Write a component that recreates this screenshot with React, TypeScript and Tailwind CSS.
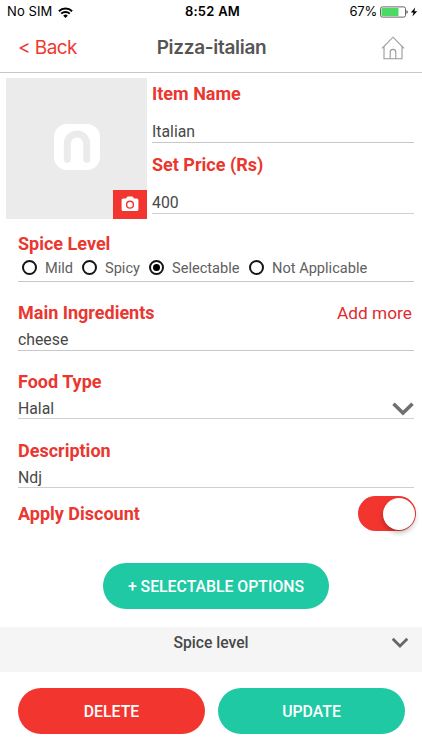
import React, { useState } from 'react';

const levels = [
  { label: 'Mild', width: 'w-[60px]' },
  { label: 'Spicy', width: 'w-[67px]' },
  { label: 'Selectable', width: 'w-[100px]' },
  { label: 'Not Applicable', width: 'w-[130px]' },
];

const StatusBar = () => (
  <div className="h-6 flex items-center justify-between pl-[7px] pr-[4px] text-[13px] text-black font-['Inter',sans-serif]">
    <div className="flex-1 flex items-center gap-[6px]">
      <span className="tracking-[0.1px]">No SIM</span>
      <svg width="15" height="11" viewBox="0 0 15 11" fill="none" stroke="#000" strokeWidth="1.9">
        <path d="M0.9 4.2a9.4 9.4 0 0 1 13.2 0" />
        <path d="M3.2 6.7a6.1 6.1 0 0 1 8.6 0" />
        <path d="M7.5 11 5.2 8.7a3.3 3.3 0 0 1 4.6 0z" fill="#000" stroke="none" />
      </svg>
    </div>
    <span className="font-semibold tracking-[0.25px]">8:52 AM</span>
    <div className="flex-1 flex items-center justify-end">
      <span className="mr-[3px] tracking-[-0.2px]">67%</span>
      <svg width="28" height="12" viewBox="0 0 28 12">
        <rect x="0.5" y="0.9" width="25" height="10.2" rx="1.8" fill="#fff" stroke="#666" />
        <rect x="1.5" y="1.9" width="17" height="8.2" rx="0.6" fill="#4cd964" />
        <path d="M26.5 4.2c1.6.5 1.6 3.1 0 3.6z" fill="#333" />
      </svg>
      <svg className="ml-[2px]" width="8" height="10" viewBox="0 0 8 10">
        <path d="M5.2 0.4 0.8 5.5h2.7L2.4 9.6 7.2 4.3H4.4z" fill="#000" />
      </svg>
    </div>
  </div>
);

const Header = () => (
  <div className="h-[49px] flex items-center justify-between pl-[18px] pr-[17px] border-b border-[#c8c8c8] font-['Inter',sans-serif]">
    <button className="flex-1 text-left text-[19px] tracking-[-0.55px] text-[#f0382f]">&lt; Back</button>
    <h1 className="text-[19px] tracking-[-0.3px] font-semibold text-[#555]">Pizza-italian</h1>
    <div className="flex-1 flex justify-end">
      <svg width="24" height="24" viewBox="0 0 24 24" fill="none" stroke="#999" strokeWidth="1.1">
        <path d="M1 12.3 12 1.2l11 11.1" />
        <path d="M3 10.6v12.2h18V10.6" />
        <path d="M9.2 22.6v-6.4a2.8 2.8 0 0 1 5.6 0v6.4" />
      </svg>
    </div>
  </div>
);

const Photo = () => (
  <div className="relative w-[141px] h-[141px] bg-[#ebebeb] flex items-center justify-center">
    <svg className="-mt-1" width="46" height="46" viewBox="0 0 46 46" fill="none">
      <rect width="46" height="46" rx="13" fill="#fff" />
      <path d="M13.3 35.3V19.7a9.7 9.7 0 0 1 19.4 0v15.6" stroke="#ebebeb" strokeWidth="7" strokeLinecap="round" />
    </svg>
    <div className="absolute right-0 bottom-0 w-[34px] h-[29px] bg-[#f3352f] flex items-center justify-center">
      <svg className="-mt-px" width="18" height="16" viewBox="0 0 18 16">
        <path
          d="M2.2 2.4H5L6 .9a1 1 0 0 1 .8-.4h4.400a1 1 0 0 1 .8.4l1 1.500h2.800a1.600 1.600 0 0 1 1.600 1.600v9.500a1.600 1.600 0 0 1-1.600 1.600H2.200a1.600 1.600 0 0 1-1.600-1.600V4a1.600 1.600 0 0 1 1.600-1.600z"
          fill="#fff"
        />
        <circle cx="9" cy="8.7" r="3.4" fill="none" stroke="#f3352f" strokeWidth="1.4" />
      </svg>
    </div>
  </div>
);

const Label = ({ children }: { children: React.ReactNode }) => (
  <h2 className="text-[18px] leading-5 font-bold text-[#ea3730]">{children}</h2>
);

export default function App() {
  const [level, setLevel] = useState('Selectable');
  const [discount, setDiscount] = useState(true);

  return (
    <div className="w-[422px] h-[750px] overflow-hidden bg-white text-[#484848] font-['Roboto',sans-serif]">
      <StatusBar />
      <Header />

      <div className="flex gap-[5px] pt-[5px] pl-[6px] pr-2">
        <Photo />
        <div className="flex-1 pt-[6px]">
          <Label>Item Name</Label>
          <p className="h-[39px] pt-[18px] text-[15.8px] leading-5 border-b border-[#c8c8c8]">Italian</p>
          <div className="pt-3">
            <Label>Set Price (Rs)</Label>
          </div>
          <p className="h-[39px] pt-[18px] text-[15.8px] leading-5 border-b border-[#d0d0d0]">400</p>
        </div>
      </div>

      <div className="pl-[18px] pr-2">
        <section className="h-[63px] pt-[15px] border-b border-[#c8c8c8]">
          <Label>Spice Level</Label>
          <div className="flex pl-1 pt-[3px]">
            {levels.map((item) => (
              <button
                key={item.label}
                onClick={() => setLevel(item.label)}
                className={`flex items-center gap-2 h-5 text-[14.6px] text-[#606060] whitespace-nowrap ${item.width}`}
              >
                <span className="w-[15px] h-[15px] shrink-0 rounded-full border-2 border-[#151515] flex items-center justify-center">
                  {level === item.label && <span className="w-[7px] h-[7px] rounded-full bg-black" />}
                </span>
                <span className="leading-5 pt-[2px]">{item.label}</span>
              </button>
            ))}
          </div>
        </section>

        <section className="h-[69px] pt-[21px] border-b border-[#c8c8c8]">
          <div className="flex justify-between pr-[2px]">
            <Label>Main Ingredients</Label>
            <button className="text-[17.3px] leading-5 text-[#e02b2f]">Add more</button>
          </div>
          <p className="pt-[7px] text-[15.8px] leading-5">cheese</p>
        </section>

        <section className="h-[68px] pt-[21px] border-b border-[#d0d0d0]">
          <Label>Food Type</Label>
          <div className="flex items-center justify-between pt-[7px]">
            <p className="text-[15.8px] leading-5">Halal</p>
            <svg width="22" height="14" viewBox="0 0 22 14" fill="none" stroke="#707070" strokeWidth="3.6">
              <path d="M1.5 1.7 11 11l9.5-9.3" />
            </svg>
          </div>
        </section>

        <section className="h-[69px] pt-[22px] border-b border-[#d0d0d0]">
          <Label>Description</Label>
          <p className="pt-[7px] text-[15.8px] leading-5">Ndj</p>
        </section>
      </div>

      <div className="flex items-center justify-between h-[51px] pl-[18px] pr-[6px]">
        <Label>Apply Discount</Label>
        <button
          onClick={() => setDiscount(!discount)}
          className={`w-[58px] h-[35px] rounded-full px-[1px] flex items-center ${discount ? 'justify-end bg-[#f3352f]' : 'justify-start bg-gray-300'}`}
        >
          <span className="w-[32px] h-[32px] rounded-full bg-white shadow-[0_3px_5px_rgba(0,0,0,0.25)]" />
        </button>
      </div>

      <div className="flex justify-center pt-[24px] pl-[10px]">
        <button className="w-[226px] h-[46px] pt-px rounded-full bg-[#1fc9a3] text-white text-[15.8px] font-medium">
          + SELECTABLE OPTIONS
        </button>
      </div>

      <div className="relative h-[45px] mt-[18px] bg-[#f5f5f5] flex justify-center pt-[6px]">
        <span className="text-[15.7px] leading-5 font-medium">Spice level</span>
        <svg className="absolute right-[13px] top-[10px]" width="18" height="12" viewBox="0 0 18 12" fill="none" stroke="#666" strokeWidth="2.7">
          <path d="M1.7 1.7 9 9l7.3-7.3" />
        </svg>
      </div>

      <div className="flex gap-[13px] pt-4 pl-[18px] pr-[17px] text-[15.8px] font-medium text-white">
        <button className="flex-1 h-[46px] pt-px rounded-full bg-[#f3352f]">DELETE</button>
        <button className="flex-1 h-[46px] pt-px rounded-full bg-[#1fc9a3]">UPDATE</button>
      </div>
    </div>
  );
}
